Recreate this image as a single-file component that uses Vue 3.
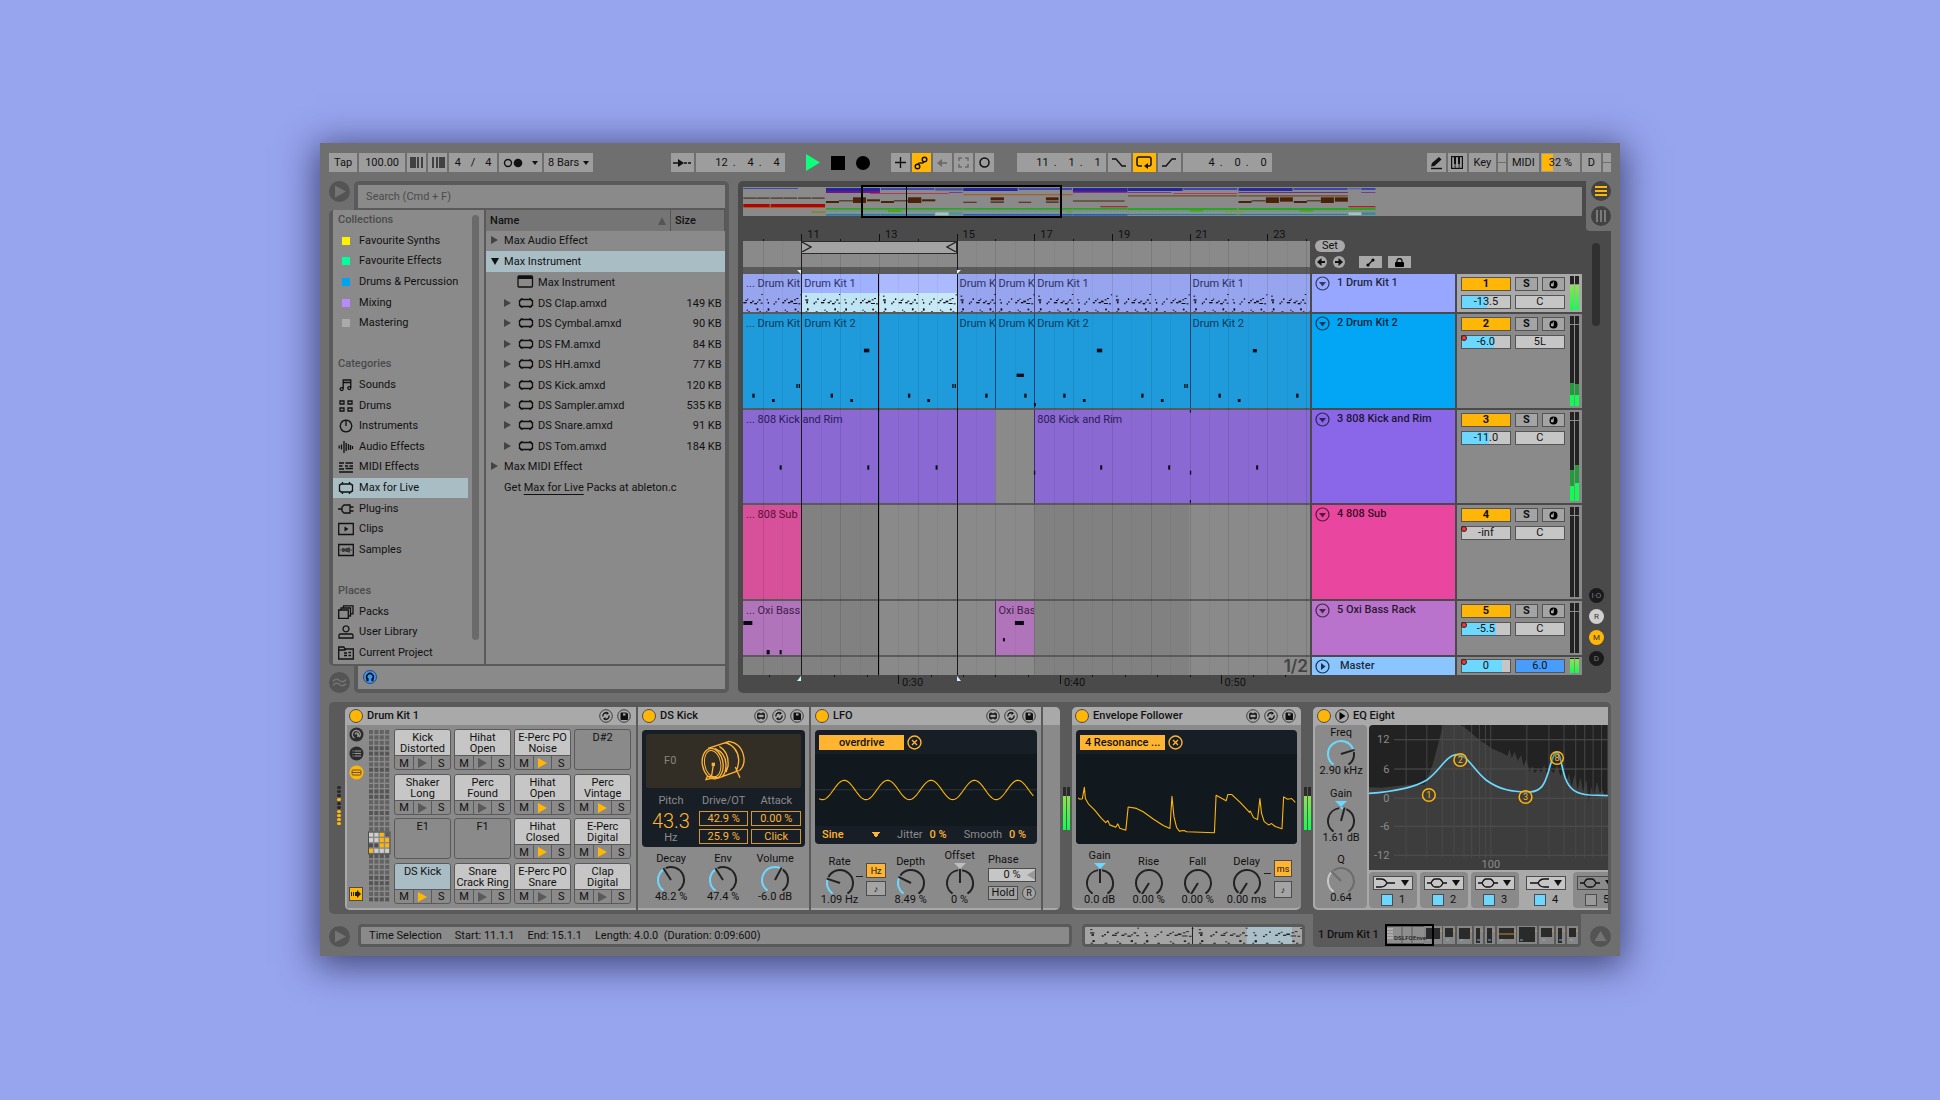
<script setup>
import { h } from 'vue'

/* ---------- small drawing helpers ---------- */
const polar = (a, r) => {
  const t = (a * Math.PI) / 180
  return [15 + r * Math.sin(t), 15 - r * Math.cos(t)].map(n => n.toFixed(2)).join(' ')
}
const arc = (a, b) => `M${polar(a, 13)}A13 13 0 ${b - a > 180 ? 1 : 0} 1 ${polar(b, 13)}`

const Knob = p => {
  const from = p.from ?? -145
  const parts = [
    h('path', { d: arc(Math.max(p.angle + 9, -145), 145), stroke: p.dim ? '#6c6c6c' : '#222' })
  ]
  if (p.from !== undefined) parts.push(h('path', { d: arc(-145, -8), stroke: '#222' }))
  if (p.angle - from > 4) parts.push(h('path', { d: arc(from, p.angle - 2), stroke: p.dim ? '#c8c8c8' : '#6cd8ff' }))
  parts.push(h('path', { d: `M15 15L${polar(p.angle, 14)}`, stroke: p.dim ? '#6c6c6c' : '#222' }))
  return h('svg', { class: 'knob', viewBox: '0 0 30 26', width: 30, height: 26, fill: 'none', 'stroke-width': 2, role: 'img' }, parts)
}
Knob.props = ['angle', 'from', 'dim']

const icons = {
  notes: 'M5.2 11V2h7.6v8M5.2 4.5h7.6M3.7 12.6a1.5 1.5 0 1 0 0-3 1.5 1.5 0 0 0 0 3M11.3 11.6a1.5 1.5 0 1 0 0-3 1.5 1.5 0 0 0 0 3',
  drums: 'M2 2h4v3H2zM10 2h4v3h-4zM2 9h4v3H2zM10 9h4v3h-4z',
  knob: 'M8 1.2a5.8 5.8 0 1 0 .01 0M8 1v6',
  audio: 'M1.2 5.5v3M3.5 4.5v5M6 1v12M8.2 3v8M10.5 4v6M12.5 5v5M14.5 6v3',
  midi: 'M1 3h5M7.5 3H15M1 6h3.5M7 6h3M11.5 6H15M1 9h5M7.5 8.5H15M1 12h14',
  max: 'M3 3h10q0 1 1.5 1v6q-1.500 0-1.500 1H3q0-1-1.500-1V4Q3 4 3 3zM4.500 1v2M11.500 1v2M4.500 11v2M11.500 11v2',
  plug: 'M0 7h4M6 3h6v8H6L4 9V5zM12 5h3.5M12 9h3.5',
  clip: 'M.7 1.5h14.6v11H.7z',
  sample: 'M.7 1.5h14.6v11H.7zM3 6.5v1M5 5v4M7 5.5v3M9 5v4M11 4.5v5M13 6.5v1',
  packs: 'M.7 5h9.6v8.3H.7zM3 5V3h9.5v8h-2M5.5 3V.8H15v8h-2.5',
  user: 'M8 .8a3 3 0 1 0 .01 0M1 13V10.5q0-1.5 1.5-1.5h11q1.5 0 1.5 1.5V13z',
  project: 'M.7 13V1h5l1.5 2h8.1v10zM.7 4h7M6 7h3M6 9.5h3M10.5 6.5h2.5M10.5 9.5h2.5'
}
const Icon = p =>
  h('svg', { viewBox: '0 0 16 14', width: 16, height: 14, fill: 'none', stroke: '#111', 'stroke-width': 1.3 }, [
    h('path', { d: icons[p.name] }),
    p.name === 'clip' ? h('path', { d: 'M6.5 4.5L10.5 7L6.5 9.5z', fill: '#111', stroke: 'none' }) : null
  ])
Icon.props = ['name']

const devIcons = {
  map: [h('path', { d: 'M3.8 5h6.400v4H3.800zM5 3.500V5M9 3.500V5M5 9v1.500M9 9v1.500', 'stroke-width': 1.3 })],
  swap: [h('path', { d: 'M4 7.5a3 3 0 0 1 4-3.5M10 6.5a3 3 0 0 1-4 3.5', 'stroke-width': 1.3 }), h('path', { d: 'M7.5 2.5l2.5 1.7-2.5 1.8zM6.5 8l-2.5 1.8 2.5 1.7z', fill: '#111', stroke: 'none' })],
  save: [h('path', { d: 'M4 4h5.5l1 1v5.5H4z', fill: '#111' }), h('path', { d: 'M6 4.500h2.500V6.500H6z', fill: '#aaa', stroke: 'none' })]
}
const DevIcon = p =>
  h('svg', { viewBox: '0 0 14 14', width: 14, height: 14, fill: 'none', stroke: '#111' }, [
    h('circle', { cx: 7, cy: 7, r: 6.3, stroke: '#3c3c3c' }),
    ...devIcons[p.name]
  ])
DevIcon.props = ['name']

/* ---------- browser ---------- */
const sidebar = [
  { head: 'Collections' },
  { label: 'Favourite Synths', color: '#fff200' },
  { label: 'Favourite Effects', color: '#00ff9c' },
  { label: 'Drums & Percussion', color: '#00a2f2' },
  { label: 'Mixing', color: '#b98aff' },
  { label: 'Mastering', color: '#aaaaaa' },
  {},
  { head: 'Categories' },
  { label: 'Sounds', icon: 'notes' },
  { label: 'Drums', icon: 'drums' },
  { label: 'Instruments', icon: 'knob' },
  { label: 'Audio Effects', icon: 'audio' },
  { label: 'MIDI Effects', icon: 'midi' },
  { label: 'Max for Live', icon: 'max', active: true },
  { label: 'Plug-ins', icon: 'plug' },
  { label: 'Clips', icon: 'clip' },
  { label: 'Samples', icon: 'sample' },
  {},
  { head: 'Places' },
  { label: 'Packs', icon: 'packs' },
  { label: 'User Library', icon: 'user' },
  { label: 'Current Project', icon: 'project' }
]
const files = [
  ['DS Clap.amxd', '149 KB'], ['DS Cymbal.amxd', '90 KB'], ['DS FM.amxd', '84 KB'], ['DS HH.amxd', '77 KB'],
  ['DS Kick.amxd', '120 KB'], ['DS Sampler.amxd', '535 KB'], ['DS Snare.amxd', '91 KB'], ['DS Tom.amxd', '184 KB']
]

/* ---------- arrangement ---------- */
const FIRST = 9.5
const SPAN = 14.6
const pct = bar => ((bar - FIRST) / SPAN) * 100 + '%'
const wpct = (a, b) => ((b - a) / SPAN) * 100 + '%'
const END = FIRST + SPAN
const bars = [11, 13, 15, 17, 19, 21, 23]
const barTicks = [10, 12, 14, 16, 18, 20, 22, 24]
const gridLines = Array.from({ length: 29 }, (_, i) => FIRST + 0.5 + i * 0.5).filter(b => b < END)
const seconds = [['0:30', 13.49], ['0:40', 17.66], ['0:50', 21.8]]
const secTicks = [10.18, 11.85, 12.68, 14.33, 15.16, 16.0, 16.83, 18.5, 19.33, 20.16, 21, 22.63, 23.46]

/* two bars of the drum pattern: x, y, width, height */
const beat = [
  [11, 76, 9, 4], [11, 65, 5, 3], [14, 82, 5, 6], [36, 86, 4, 5], [41, 82, 4, 4], [47, 73, 4, 5],
  [58, 84, 10, 4], [64, 78, 6, 3], [69, 74, 4, 3], [78, 84, 7, 4], [84, 80, 6, 3], [91, 87, 8, 4], [99, 83, 4, 3], [104, 76, 6, 4], [110, 86, 6, 3], [112, 60, 4, 3],
  [12, 112, 5, 3], [16, 103, 5, 6], [42, 112, 6, 3], [68, 107, 4, 3], [73, 112, 5, 3], [98, 103, 5, 6], [106, 112, 5, 3],
  [128, 76, 4, 3], [131, 84, 4, 5], [149, 88, 4, 4], [154, 82, 4, 4], [162, 73, 4, 4],
  [175, 84, 6, 4], [181, 78, 5, 4], [187, 74, 4, 3], [192, 84, 7, 4], [199, 80, 8, 5], [208, 87, 12, 3], [210, 76, 6, 3], [217, 72, 6, 3], [223, 88, 6, 3], [229, 61, 4, 3],
  [131, 103, 5, 7], [126, 112, 4, 3], [155, 112, 6, 3], [182, 107, 4, 3], [187, 112, 5, 3], [212, 104, 5, 5], [220, 112, 5, 3]
]
const beatNotes = []
for (let k = -1; k < 7; k++) for (const [x, y, w, hh] of beat) beatNotes.push([x + 215 + k * 233, y, w, hh])

const row = (xs, y, w, hh) => xs.map(x => [x, y, w, hh])
const tracks = [
  {
    n: 1, name: 'Drum Kit 1', h: 38, head: '#97a6ff', clip: '#97a4ee', ink: '#2b3164', vol: '-13.5', fill: 52, pan: 'C', lit: true,
    clips: [[9.5, 11, '... Drum Kit'], [11, 15, 'Drum Kit 1', true], [15, 16, 'Drum K'], [16, 17, 'Drum K'], [17, 21, 'Drum Kit 1'], [21, END, 'Drum Kit 1']],
    notes: beatNotes, meter: ['bright', 74, 74]
  },
  {
    n: 2, name: 'Drum Kit 2', h: 94, head: '#03a5f5', clip: '#1f9bdb', ink: '#08395a', vol: '-6.0', fill: 66, pan: '5L', dot: true,
    clips: [[9.5, 11, '... Drum Kit'], [11, 15, 'Drum Kit 2'], [15, 16, 'Drum K'], [16, 17, 'Drum K'], [17, 21, 'Drum Kit 2'], [21, END, 'Drum Kit 2']],
    notes: [...row([402, 1101], 104, 16, 11), [1569, 105, 12, 10], [860, 179, 22, 10], ...row([199, 206, 667, 674, 1363, 1370], 210, 4, 12),
      ...row([67, 302, 534, 766, 883, 1000, 1234, 1466, 1699], 239, 7, 12), ...row([126, 361, 592, 1059, 1293, 1524], 255, 8, 9), [912, 267, 6, 10]],
    meter: ['split', 26, 24]
  },
  {
    n: 3, name: '808 Kick and Rim', h: 93, head: '#8a66e8', clip: '#8a69d2', ink: '#2d1a58', vol: '-11.0', fill: 56, pan: 'C',
    clips: [[9.5, 16, '... 808 Kick and Rim'], [17, END, '808 Kick and Rim']],
    notes: [...row([149, 412, 617, 1111, 1315, 1579], 166, 6, 13), ...row([912, 1380], 182, 4, 12), [1380, 0, 3, 8], [1380, 270, 3, 9]],
    meter: ['split', 35, 40]
  },
  {
    n: 4, name: '808 Sub', h: 94, head: '#e9479f', clip: '#d6519a', ink: '#5a0d38', vol: '-inf', fill: 0, pan: 'C', dot: true,
    clips: [[9.5, 11, '... 808 Sub']], notes: [], meter: ['off']
  },
  {
    n: 5, name: 'Oxi Bass Rack', h: 54, head: '#b973cc', clip: '#b074ba', ink: '#42204a', vol: '-5.5', fill: 70, pan: 'C', dot: true,
    clips: [[9.5, 11, '... Oxi Bass'], [16, 17, 'Oxi Bas']],
    notes: [[40, 60, 27, 12], [110, 147, 9, 13], [149, 147, 6, 13], [855, 60, 27, 12], [819, 111, 6, 10]], meter: ['off']
  }
]

/* song overview blocks: x, y, width, height, colour */
const song = [
  [40, 174, 164, 3, '#4348a8'], [288, 174, 162, 9, '#2226a0'], [288, 183, 162, 6, '#761484'], [453, 174, 160, 6, '#3846b8'], [616, 174, 82, 4, '#4a58b4'], [616, 178, 82, 3, '#2a38a0'],
  [420, 189, 236, 3, '#b03a5a'], [657, 186, 41, 3, '#7a3a90'], [700, 174, 163, 9, '#2226a0'], [866, 174, 160, 6, '#3846b8'], [700, 192, 328, 4, '#a06038'],
  [1029, 174, 164, 9, '#2226a0'], [1029, 183, 164, 5, '#761484'], [1194, 174, 164, 9, '#2226a0'], [1360, 174, 162, 6, '#3846b8'], [1194, 186, 130, 3, '#7a3a90'], [1331, 189, 191, 3, '#b03a5a'], [1194, 195, 328, 5, '#7a5a38'],
  [1526, 174, 162, 9, '#2a2aa0'], [1691, 174, 162, 6, '#3846b8'], [1526, 186, 328, 3, '#6a3080'], [1526, 195, 328, 5, '#7a5a38'], [1856, 174, 36, 4, '#5a64b4'], [1894, 174, 43, 6, '#3846b8'], [1894, 186, 43, 3, '#7a3a90'],
  ...row([40, 80, 122, 162, 204, 245], 202, 39, 5).map(r => [...r, '#5e4a3c']),
  [40, 222, 79, 9, '#b00404'], [122, 222, 163, 9, '#b00404'], [40, 231, 245, 3, '#a06018'], [245, 244, 42, 5, '#8a8428'],
  [288, 213, 39, 6, '#4a2208'], [327, 211, 42, 3, '#4a2208'], [369, 202, 39, 17, '#4a2208'], [411, 208, 39, 6, '#4a2208'],
  [453, 213, 39, 6, '#4a2208'], [492, 211, 42, 3, '#4a2208'], [534, 202, 40, 17, '#4a2208'], [576, 208, 40, 6, '#4a2208'],
  [700, 215, 40, 4, '#5a3a28'], [782, 202, 40, 9, '#4a2208'], [782, 214, 40, 5, '#5a3a28'], [866, 215, 38, 4, '#5a3a28'], [948, 202, 38, 9, '#4a2208'], [948, 214, 38, 5, '#5a3a28'],
  [1029, 211, 155, 4, '#5e4028'], [1111, 228, 82, 4, '#a03030'],
  [1526, 213, 39, 6, '#4a2208'], [1565, 211, 42, 3, '#4a2208'], [1608, 202, 39, 17, '#4a2208'], [1650, 202, 39, 13, '#4a2208'],
  [1692, 213, 39, 6, '#4a2208'], [1731, 211, 42, 3, '#4a2208'], [1773, 202, 39, 17, '#4a2208'], [1815, 202, 39, 13, '#4a2208'], [1856, 228, 81, 4, '#b02020'],
  [288, 234, 410, 5, '#24a824'], [700, 234, 328, 5, '#24a824'], [1029, 234, 164, 5, '#24a824'], [1194, 234, 328, 6, '#24a824'], [1526, 234, 328, 6, '#24a824'], [1856, 234, 81, 6, '#24a824'],
  [474, 239, 40, 8, '#58a020'], [1010, 244, 18, 6, '#6a9028'], [1380, 240, 40, 5, '#58a020'], [1484, 244, 60, 6, '#909028'], [1710, 240, 40, 5, '#58a020'],
  [288, 252, 164, 5, '#3478a8'], [453, 252, 160, 5, '#3478a8'], [616, 247, 40, 9, '#98c8c4'], [657, 247, 40, 9, '#4898a0'], [700, 252, 328, 5, '#2c5eb0'], [1029, 252, 164, 5, '#2c5eb0'],
  [1194, 252, 328, 3, '#3478a8'], [1526, 252, 328, 3, '#3478a8'], [1856, 247, 38, 8, '#98c8c4'], [1896, 247, 41, 8, '#388ca0']
]

/* ---------- devices ---------- */
const pads = [
  ['Kick', 'Distorted', 0], ['Hihat', 'Open', 0], ['E-Perc PO', 'Noise', 1], ['D#2'],
  ['Shaker', 'Long', 0], ['Perc', 'Found', 0], ['Hihat', 'Open', 1], ['Perc', 'Vintage', 1],
  ['E1'], ['F1'], ['Hihat', 'Closed', 1], ['E-Perc', 'Digital', 1],
  ['DS Kick', '', 1, true], ['Snare', 'Crack Ring', 0], ['E-Perc PO', 'Snare', 0], ['Clap', 'Digital', 0]
]
const cells = []
const lit = ['ccya', 'ccyy', 'ddyy', 'yccc']
for (let r = 0; r < 32; r++)
  for (let c = 0; c < 4; c++) {
    const k = r - 19
    const map = { c: '#cfcfcf', y: '#ffb607', a: '#5a5a5a', d: '#4f4f4f' }
    cells.push({ x: 1 + c * 5.4, y: 1 + r * 5.4, f: k >= 0 && k < 4 ? map[lit[k][c]] : (r % 4 === 3 || r % 8 === 4 ? '#555' : '#626262') })
  }
const dots = [0, 0, 0, 1, 0, 0, 1, 1, 1, 1]

let sine = 'M568 325'
for (let x = 570; x <= 1206; x += 3) sine += `L${x} ${(297 - 29 * Math.cos(((x - 643) / 129.3) * 2 * Math.PI)).toFixed(1)}`

const bell = 'M0 7h4M16 7h4M4 7q2-4 4-4h4q2 0 4 4q-2 4-4 4H8q-2 0-4-4'
const bands = [
  ['1', 'M0 3h5q4 0 6 4q-2 4-6 4H0M11 7h8'],
  ['2', bell],
  ['3', bell],
  ['4', 'M20 3h-5q-4 0-6 4q2 4 6 4h5M9 7H1'],
  ['5', bell]
]
const freqLines = [321, 383, 429, 464, 494, 517, 540, 558, 574, 682, 748, 793, 828, 855, 880, 905]
const spectrum = (() => {
  let d = 'M210 292L250 293L300 287L350 283L376 284L400 225L432 105L484 105L512 125L540 150L580 177L610 190L624 198'
  const peaks = [[630, 178], [637, 205], [645, 185], [655, 212], [665, 195], [672, 228], [680, 208], [690, 245], [698, 228], [706, 250], [716, 235], [724, 248], [734, 225], [742, 252], [752, 238], [762, 250], [772, 225], [782, 258], [792, 240], [800, 275], [808, 250], [816, 290], [824, 255], [834, 300], [842, 262], [850, 305], [860, 268], [867, 335], [874, 290], [882, 318], [892, 275], [900, 310], [908, 300], [916, 322], [924, 305]]
  peaks.forEach(([x, y]) => (d += `L${x} ${y}`))
  return d + 'L924 540L210 540z'
})()
const nodes = [[389, 315, '1'], [483, 210, '2'], [678, 321, '3'], [772, 204, '8']]

const envelope = 'M115 318L120 322L128 321L134 286L137 320L146 336L165 355L185 380L198 393L204 387L210 400L228 407L234 397L240 410L258 416L265 346L290 350L310 360L340 382L370 402L390 411L396 313L402 375L410 408L418 419L432 417L440 421L523 424L528 310L558 327L563 308L575 308L600 332L628 362L630 358L640 378L652 384L659 320L664 365L672 390L685 400L694 396L705 405L725 412L730 315L742 322L754 320L765 332'

/* chain overview: x, width, kind */
const miniDevices = [
  [41, 18, 1], [60, 12, 0], [74, 15, 1], [91, 9, 2], [102, 10, 2], [114, 19, 1], [134, 20, 3], [156, 15, 0], [173, 9, 2], [184, 11, 0]
]
</script>

<template>
  <div class="stage">
    <main class="live">
      <!-- transport -->
      <header class="transport">
        <div class="grp">
          <button class="tb w28">Tap</button>
          <input class="tb w46" aria-label="Tempo" value="100.00" />
          <button class="tb w18" aria-label="Nudge down"><svg width="14" height="11" viewBox="0 0 14 11"><path d="M1 0v11M3 0v11M5 0v11M8 0v11M12 0v11" stroke="#111" stroke-width="1.3" /></svg></button>
          <button class="tb w18" aria-label="Nudge up"><svg width="14" height="11" viewBox="0 0 14 11"><path d="M2 0v11M6 0v11M9 0v11M11 0v11M13 0v11" stroke="#111" stroke-width="1.3" /></svg></button>
          <span class="tb w48 sig"><i>4</i><i>/</i><i>4</i></span>
          <button class="tb w43 spread" aria-label="Metronome"><svg width="20" height="10" viewBox="0 0 20 10"><circle cx="5" cy="5" r="3.5" fill="none" stroke="#111" stroke-width="1.4" /><circle cx="15" cy="5" r="4.3" fill="#111" /></svg><b class="tri"></b></button>
          <button class="tb w49 spread">8 Bars<b class="tri"></b></button>
        </div>
        <div class="sp1"></div>
        <div class="grp">
          <button class="tb w23" aria-label="Follow"><svg width="18" height="10" viewBox="0 0 18 10"><path d="M0 5h6M11 5h3M15 5h3" stroke="#111" stroke-width="1.3" /><path d="M5 1l6 4-6 4z" fill="#111" /></svg></button>
          <span class="tb w89 pos"><i>12</i><u>.</u><i>4</i><u>.</u><i>4</i></span>
        </div>
        <div class="grp play">
          <button aria-label="Play"><svg width="14" height="17" viewBox="0 0 14 17"><path d="M0 0l14 8.5L0 17z" fill="#0dff7c" /></svg></button>
          <button aria-label="Stop"><svg width="14" height="14"><rect width="14" height="14" fill="#000" /></svg></button>
          <button aria-label="Record"><svg width="14" height="14"><circle cx="7" cy="7" r="7" fill="#000" /></svg></button>
        </div>
        <div class="grp">
          <button class="tb w18" aria-label="Overdub"><svg width="11" height="11"><path d="M5.5 0v11M0 5.5h11" stroke="#111" stroke-width="1.4" /></svg></button>
          <button class="tb w18 on" aria-label="Automation arm"><svg width="14" height="14" viewBox="0 0 14 14" fill="none" stroke="#111" stroke-width="1.4"><circle cx="3.5" cy="10.5" r="2.3" /><circle cx="10.5" cy="3.5" r="2.3" /><path d="M4 8.3Q4.5 6.5 7 7T9.8 5.6" /></svg></button>
          <button class="tb w18" aria-label="Re-enable"><svg width="10" height="10"><path d="M3 5h7" stroke="#6a6a6a" stroke-width="1.6" /><path d="M0 5l5-4v8z" fill="#6a6a6a" /></svg></button>
          <button class="tb w18" aria-label="Capture"><svg width="11" height="11" fill="none" stroke="#6a6a6a" stroke-width="1.5"><path d="M1 4V1h3M7 1h3v3M10 7v3H7M4 10H1V7" /></svg></button>
          <button class="tb w18" aria-label="Session record"><svg width="11" height="11"><circle cx="5.5" cy="5.5" r="4.5" fill="none" stroke="#111" stroke-width="1.5" /></svg></button>
        </div>
        <div class="grp loop">
          <span class="tb w89 pos"><i>11</i><u>.</u><i>1</i><u>.</u><i>1</i></span>
          <button class="tb w23" aria-label="Punch in"><svg width="14" height="9" fill="none" stroke="#111" stroke-width="1.3"><path d="M0 1h4l6 7h4" /></svg></button>
          <button class="tb w23 on" aria-label="Loop"><svg width="16" height="13" fill="none" stroke="#111" stroke-width="1.5"><path d="M6 10H3q-2 0-2-2V3q0-2 2-2h10q2 0 2 2v5q0 2-2 2h-2" /><path d="M12 7v6l-4-3z" fill="#111" stroke="none" /></svg></button>
          <button class="tb w23" aria-label="Punch out"><svg width="14" height="9" fill="none" stroke="#111" stroke-width="1.3"><path d="M0 8h4l6-7h4" /></svg></button>
          <span class="tb w89 pos"><i>4</i><u>.</u><i>0</i><u>.</u><i>0</i></span>
        </div>
        <div class="sp2"></div>
        <div class="grp">
          <button class="tb w18" aria-label="Draw"><svg width="13" height="14"><path d="M1 12.5h11" stroke="#111" stroke-width="1.4" /><path d="M1 10.5l1-3.5L9 1l2.5 2.5L4.5 10z" fill="#111" /></svg></button>
          <button class="tb w18" aria-label="Computer keyboard"><svg width="12" height="13"><rect x=".6" y=".6" width="10.8" height="11.8" fill="none" stroke="#111" stroke-width="1.2" /><path d="M3 1h2v7H3zM7 1h2v7H7zM3.7 8h.8v4h-.8zM7.7 8h.8v4h-.8z" fill="#111" /></svg></button>
          <button class="tb w27">Key</button>
          <span class="duo"></span>
          <button class="tb w31">MIDI</button>
          <span class="tb w39 cpu">32 %</span>
          <button class="tb w18">D</button>
          <span class="duo"></span>
        </div>
      </header>

      <!-- browser and arrangement -->
      <section class="middle">
        <section class="browser">
          <div class="b-top">
            <div class="corner"><button class="disc" aria-label="Preview"><svg width="21" height="21"><path d="M6 4.5l11 6-11 6z" fill="#747474" /></svg></button></div>
            <div class="tabbed tt"><input class="search" aria-label="Search" placeholder="Search (Cmd + F)" /></div>
          </div>
          <div class="b-mid">
            <nav class="side">
              <div class="side-list">
                <template v-for="(s, i) in sidebar" :key="i">
                  <h3 v-if="s.head" class="s-head">{{ s.head }}</h3>
                  <button v-else-if="s.label" class="s-item" :class="{ active: s.active }">
                    <span v-if="s.color" class="sw"><em :style="{ background: s.color }"></em></span>
                    <Icon v-else :name="s.icon" />{{ s.label }}
                  </button>
                  <div v-else class="s-gap"></div>
                </template>
              </div>
              <div class="s-scroll"></div>
            </nav>
            <div class="files">
              <table>
                <thead><tr><th>Name<svg width="8" height="8"><path d="M4 0l4 8H0z" fill="#555" /></svg></th><th class="sz">Size</th></tr></thead>
                <tbody>
                  <tr><td><span class="ar"></span>Max Audio Effect</td><td></td></tr>
                  <tr class="sel"><td><span class="ar down"></span>Max Instrument</td><td></td></tr>
                  <tr><td class="l2"><svg width="17" height="13" class="fi"><rect x="1" y="1" width="14.5" height="11" rx="1" fill="none" stroke="#111" stroke-width="1.3" /><path d="M1 1h14.5v3H1z" fill="#111" /></svg>Max Instrument</td><td></td></tr>
                  <tr v-for="f in files" :key="f[0]">
                    <td class="l1"><span class="ar"></span><svg width="16" height="12" viewBox="0 0 16 12" class="fi2" fill="none" stroke="#111" stroke-width="1.3"><path d="M2.500 2.500h11v1.200h1v4.600h-1v1.200h-11V8.300h-1V3.700h1zM4 1v1.500M12 1v1.500M4 9.500V11M12 9.500V11" /></svg>{{ f[0] }}</td>
                    <td class="num">{{ f[1] }}</td>
                  </tr>
                  <tr><td><span class="ar"></span>Max MIDI Effect</td><td></td></tr>
                  <tr><td class="get" colspan="2">Get <a href="#">Max for Live</a> Packs at ableton.c</td></tr>
                </tbody>
              </table>
            </div>
          </div>
          <div class="b-top">
            <div class="corner c-bl"><button class="disc" aria-label="Groove pool"><svg width="21" height="21" fill="none" stroke="#747474" stroke-width="1.5"><path d="M4 9.5q3-4 6.5-1t6.5-1M4 13.5q3-4 6.5-1t6.5-1" /></svg></button></div>
            <div class="tabbed bt"><div class="preview"><svg width="14" height="14"><circle cx="7" cy="7" r="6.5" fill="#3f95f5" stroke="#2a4a70" /><path d="M4.5 10.5V9A3.3 3.3 0 1 1 9.5 9v1.5" fill="none" stroke="#111" stroke-width="1.5" /><path d="M3.5 8.2h2v3h-2zM8.5 8.2h2v3h-2z" fill="#111" /></svg></div></div>
          </div>
        </section>

        <section class="arr">
          <div class="arr-main">
            <div class="overview">
              <svg viewBox="39 171 2517 87" preserveAspectRatio="none">
                <rect v-for="(s, i) in song" :key="i" :x="s[0]" :y="s[1]" :width="s[2]" :height="s[3]" :fill="s[4]" />
                <path d="M288 248H612M700 248H1028M1029 248H1193M1200 248H1522M1526 248H1854" stroke="#50b4b0" stroke-width="4" stroke-dasharray="6 3" />
              </svg>
              <div class="viewport"><i></i></div>
            </div>
            <div class="area">
              <div class="timeline">
                <div class="ruler">
                  <span v-for="b in bars" :key="b" class="rl" :style="{ left: pct(b) }">{{ b }}</span>
                  <span v-for="b in barTicks" :key="b" class="rt" :style="{ left: pct(b) }"></span>
                </div>
                <div class="lanes">
                  <div class="lane scrub"></div>
                  <div class="strip"></div>
                  <div v-for="t in tracks" :key="t.n" class="lane" :style="{ height: t.h + 'px' }">
                    <div v-for="(c, i) in t.clips" :key="i" class="clip" :class="{ picked: c[3] }" :style="{ left: pct(c[0]), width: wpct(c[0], c[1]), backgroundColor: t.clip, color: t.ink }">{{ c[2] }}</div>
                    <svg class="notes" :viewBox="`39 0 1701 ${t.h * 3}`" preserveAspectRatio="none">
                      <rect v-for="(n, i) in t.notes" :key="i" :x="n[0]" :y="n[1]" :width="n[2]" :height="n[3]" fill="#0a0a14" />
                    </svg>
                  </div>
                  <div class="lane master"><span class="zoomlv">1/2</span></div>
                  <i v-for="g in gridLines" :key="g" class="gl" :class="{ half: g % 1 }" :style="{ left: pct(g) }"></i>
                  <i class="edge" :style="{ left: pct(11) }"></i>
                  <i class="edge" :style="{ left: pct(15) }"></i>
                  <i class="head" :style="{ left: pct(12.98) }"></i>
                  <div class="brace" :style="{ left: pct(11), width: wpct(11, 15) }">
                    <svg width="10" height="10" fill="none" stroke="#222" stroke-width="1.2"><path d="M0 0l9 5-9 5" /></svg>
                    <svg width="10" height="10" fill="none" stroke="#222" stroke-width="1.2"><path d="M10 0L1 5l9 5" /></svg>
                  </div>
                  <span class="mk top l" :style="{ left: pct(11) }"></span>
                  <span class="mk top r" :style="{ left: pct(15) }"></span>
                </div>
                <div class="ruler time">
                  <span v-for="s in seconds" :key="s[0]" class="rl" :style="{ left: pct(s[1]) }">{{ s[0] }}</span>
                  <span v-for="s in secTicks" :key="s" class="rt" :style="{ left: pct(s) }"></span>
                  <span class="mk l" :style="{ left: pct(11) }"></span>
                  <span class="mk r" :style="{ left: pct(15) }"></span>
                </div>
              </div>
              <div class="heads">
                <div class="setrow">
                  <button class="set">Set</button>
                  <div class="setbtns">
                    <button class="rd" aria-label="Previous locator"><svg width="8" height="8"><path d="M4 4h4" stroke="#111" stroke-width="2" /><path d="M0 4l4.5-4v8z" fill="#111" /></svg></button>
                    <button class="rd" aria-label="Next locator"><svg width="8" height="8"><path d="M0 4h4" stroke="#111" stroke-width="2" /><path d="M8 4L3.5 0v8z" fill="#111" /></svg></button>
                    <button class="sq first" aria-label="Automation mode"><svg width="9" height="9"><path d="M2 7l5-5" stroke="#111" stroke-width="1.3" /><circle cx="2" cy="7" r="1.6" /><circle cx="7" cy="2" r="1.6" /></svg></button>
                    <button class="sq" aria-label="Lock envelopes"><svg width="9" height="9"><rect x="0" y="4" width="9" height="5" rx="1" /><path d="M2 4V3a2.5 2.5 0 0 1 5 0v1" fill="none" stroke="#111" stroke-width="1.3" /></svg></button>
                  </div>
                </div>
                <div v-for="t in tracks" :key="t.n" class="hrow" :style="{ height: t.h + 'px' }">
                  <div class="tname" :style="{ background: t.head }">
                    <svg width="15" height="15"><circle cx="7.5" cy="7.5" r="6.5" fill="none" stroke="#000" stroke-opacity=".65" stroke-width="1.2" /><path d="M4 6h7l-3.5 4.5z" fill="#000" fill-opacity=".65" /></svg>
                    {{ t.n }} {{ t.name }}
                  </div>
                  <div class="mix" :class="{ litrow: t.lit }">
                    <div class="ctl">
                      <button class="mb act">{{ t.n }}</button><button class="mb s">S</button>
                      <button class="mb s" aria-label="Arm"><svg width="9" height="9"><circle cx="4.5" cy="4.5" r="4" fill="#000" /><path d="M4.800 1.500v3.200a1.500 1.500 0 1 1-1-1.200V2z" fill="#aaa" /></svg></button>
                      <span class="vol"><em :style="{ width: t.fill + '%' }"></em><b v-if="t.dot"></b><span>{{ t.vol }}</span></span>
                      <span class="vol pan"><span>{{ t.pan }}</span></span>
                    </div>
                    <div class="meter" :class="t.meter[0]">
                      <i><s :style="{ height: (t.meter[1] || 0) + '%' }"></s></i>
                      <i><s :style="{ height: (t.meter[2] || 0) + '%' }"></s></i>
                    </div>
                  </div>
                </div>
                <div class="hrow mrow">
                  <div class="tname mname">
                    <svg width="15" height="15"><circle cx="7.5" cy="7.5" r="6.5" fill="none" stroke="#16324e" stroke-width="1.2" /><path d="M6 4v7l4.5-3.5z" fill="#16324e" /></svg>
                    Master
                  </div>
                  <div class="mix">
                    <div class="ctl"><span class="vol"><em class="mfill"></em><b></b><span>0</span></span><span class="vol pan cue"><span>6.0</span></span></div>
                    <div class="meter bright"><i><s class="full"></s></i><i><s class="full"></s></i></div>
                  </div>
                </div>
              </div>
            </div>
          </div>
          <div class="arr-side">
            <div class="views">
              <button class="disc dk" aria-label="Arrangement view"><svg width="20" height="20"><path d="M4 6h12M4 10h12M4 14h12" stroke="#ffb607" stroke-width="2" /></svg></button>
              <button class="disc dk" aria-label="Session view"><svg width="20" height="20"><path d="M6 4v12M10 4v12M14 4v12" stroke="#7a7a7a" stroke-width="2" /></svg></button>
            </div>
            <div class="vside">
              <div class="vscroll"></div>
              <div class="vbtns">
                <button>I·O</button><button class="lt">R</button><button class="yl">M</button><button>D</button>
              </div>
            </div>
          </div>
        </section>
      </section>

      <!-- device chain -->
      <section class="chain">
        <div class="chaindots"><i v-for="(d, i) in dots" :key="i" :class="{ y: d }"></i></div>
        <div class="rack">
          <article class="dev d-rack">
            <h2><b class="pw"></b>Drum Kit 1<span class="dic"><DevIcon name="swap" /><DevIcon name="save" /></span></h2>
            <div class="rackbody">
              <div class="rackbtns">
                <svg width="15" height="15"><circle cx="7.5" cy="7.5" r="7" fill="#2c2c2c" /><path d="M5.5 11a4 4 0 1 1 5.5-2M8 7l3 3M6 7.5a1.8 1.8 0 1 1 2 2" fill="none" stroke="#999" stroke-width="1.3" /></svg>
                <svg width="15" height="15"><circle cx="7.5" cy="7.5" r="7" fill="#2c2c2c" /><path d="M3.5 5h1M3.5 7.5h1M3.5 10h1M5.5 5H12M5.5 7.5H12M5.5 10H12" stroke="#999" stroke-width="1.2" /></svg>
                <svg width="15" height="15"><circle cx="7.5" cy="7.5" r="7" fill="#ffb607" /><rect x="3" y="5" width="9" height="5" rx="1" fill="none" stroke="#6a5216" /><path d="M3 7.5h9" stroke="#6a5216" /></svg>
                <svg class="last" width="14" height="14"><rect x=".5" y=".5" width="13" height="13" fill="#ffb607" stroke="#4c4c4c" /><path d="M2.5 5v4M4.5 5v4" stroke="#222" /><path d="M6 5h2V3l4 4-4 4V9H6z" fill="#222" /></svg>
              </div>
              <svg class="mini" width="23" height="175">
                <rect v-for="(c, i) in cells" :key="i" :x="c.x" :y="c.y" width="4" height="4" :fill="c.f" />
                <rect x=".5" y="103" width="21.5" height="22" fill="none" stroke="#4c4c4c" />
              </svg>
              <div class="pads">
                <div v-for="(p, i) in pads" :key="i" class="pad" :class="{ empty: p.length === 1, pick: p[3] }">
                  <div class="pn">{{ p[0] }}<br v-if="p[1]" />{{ p[1] }}</div>
                  <div v-if="p.length > 1" class="pb">
                    <button>M</button><button :class="{ hot: p[2] }" aria-label="Play pad"><svg width="9" height="10"><path d="M0 0l9 5-9 5z" /></svg></button><button>S</button>
                  </div>
                </div>
              </div>
            </div>
          </article>

          <article class="dev d-kick">
            <h2><b class="pw"></b>DS Kick<span class="dic"><DevIcon name="map" /><DevIcon name="swap" /><DevIcon name="save" /></span></h2>
            <div class="lcd kick">
              <div class="kpic"><span>F0</span>
                <svg width="46" height="44" viewBox="212 148 138 132" fill="none" stroke="#ffb532" stroke-width="4">
                  <ellipse cx="250" cy="222" rx="31" ry="46" transform="rotate(-10 250 222)" /><ellipse cx="250" cy="222" rx="24" ry="40" transform="rotate(-10 250 222)" stroke-width="3" />
                  <path d="M256 176q34 14 34 50 0 24-12 36M236 176L300 155M264 266L328 243M270 170q30 18 26 60l-6 18M298 155q40 6 46 50 2 24-14 38M288 158q38 14 40 52 0 20-8 36M252 226l-6 38M230 270l34-8-30-2zM318 232l14 32" />
                  <rect x="247" y="219" width="10" height="10" fill="#ffb532" stroke="none" />
                </svg>
              </div>
              <div class="kvals">
                <div class="kc"><label>Pitch</label><strong>43.3</strong><label>Hz</label></div>
                <div class="kc"><label>Drive/OT</label><button>42.9 %</button><button>25.9 %</button></div>
                <div class="kc"><label>Attack</label><button>0.00 %</button><button>Click</button></div>
              </div>
            </div>
            <div class="knobs k3">
              <div class="kn">Decay<Knob :angle="-33" />48.2 %</div>
              <div class="kn">Env<Knob :angle="-33" />47.4 %</div>
              <div class="kn">Volume<Knob :angle="28" />-6.0 dB</div>
            </div>
          </article>

          <article class="dev d-lfo">
            <h2><b class="pw"></b>LFO<span class="dic"><DevIcon name="map" /><DevIcon name="swap" /><DevIcon name="save" /></span></h2>
            <div class="lcd lfo">
              <div class="maprow"><button class="target">overdrive</button><button class="clr" aria-label="Clear mapping"><svg width="15" height="15" fill="none" stroke="#ffb532" stroke-width="1.4"><circle cx="7.5" cy="7.5" r="6.5" /><path d="M5 5l5 5M10 5l-5 5" /></svg></button></div>
              <svg class="scope" viewBox="556 189 661 216" preserveAspectRatio="none"><path d="M556 296H1217" stroke="#2c343b" stroke-width="3" /><path :d="sine" fill="none" stroke="#ffb607" stroke-width="3.3" /></svg>
              <div class="lrow">
                <select aria-label="Waveform"><option>Sine</option></select>
                <label>Jitter</label><span>0 %</span><label>Smooth</label><span>0 %</span>
              </div>
            </div>
            <div class="knobs lk">
              <div class="kn">Rate<Knob :angle="-72" />1.09 Hz</div>
              <div class="units"><button class="y">Hz</button><button>♪</button></div>
              <div class="kn">Depth<Knob :angle="-64" />8.49 %</div>
              <div class="kn">Offset<i class="arrowdn gray"></i><Knob :angle="0" :from="0" />0 %</div>
              <div class="phase"><label>Phase</label><span class="pv">0 %<i></i></span><div><button>Hold</button><button class="rr">R</button></div></div>
            </div>
          </article>
          <div class="dev d-end"><h2></h2></div>
        </div>

        <div class="cmeter"><i></i><i></i></div>

        <article class="dev solo d-env">
          <h2><b class="pw"></b>Envelope Follower<span class="dic"><DevIcon name="map" /><DevIcon name="swap" /><DevIcon name="save" /></span></h2>
          <div class="lcd lfo">
            <div class="maprow"><button class="target">4 Resonance ...</button><button class="clr" aria-label="Clear mapping"><svg width="15" height="15" fill="none" stroke="#ffb532" stroke-width="1.4"><circle cx="7.5" cy="7.5" r="6.5" /><path d="M5 5l5 5M10 5l-5 5" /></svg></button></div>
            <svg class="scope tallscope" viewBox="109 185 661 273" preserveAspectRatio="none"><path :d="envelope" fill="none" stroke="#ffb607" stroke-width="3.3" stroke-linejoin="round" /></svg>
          </div>
          <div class="knobs ek">
            <div class="kn">Gain<i class="arrowdn"></i><Knob :angle="0" :from="0" />0.0 dB</div>
            <div class="kn">Rise<Knob :angle="-148" />0.00 %</div>
            <div class="kn">Fall<Knob :angle="-148" />0.00 %</div>
            <div class="kn">Delay<Knob :angle="-148" />0.00 ms</div>
            <div class="units sqr"><button class="y">ms</button><button>♪</button></div>
          </div>
        </article>

        <div class="cmeter"><i></i><i></i></div>

        <article class="dev solo d-eq">
          <h2><b class="pw"></b><svg width="14" height="14"><circle cx="7" cy="7" r="6.3" fill="none" stroke="#222" /><path d="M4.5 3l6 4-6 4z" /></svg>EQ Eight</h2>
          <div class="eqbody">
            <div class="eqk">
              <div class="kn">Freq<Knob :angle="73" />2.90 kHz</div>
              <div class="kn">Gain<i class="arrowdn"></i><Knob :angle="15" :from="0" />1.61 dB</div>
              <div class="kn">Q<Knob :angle="-45" dim="1" />0.64</div>
            </div>
            <div class="eqr">
              <svg class="eqg" viewBox="210 105 714 435" preserveAspectRatio="none">
                <rect x="210" y="105" width="714" height="435" fill="#222" />
                <path :d="spectrum" fill="#3d3d3d" />
                <path d="M285 149H924M285 237H924M285 325H924M285 409H924M285 496H924" stroke="#505050" stroke-width="3" />
                <path v-for="f in freqLines" :key="f" :d="`M${f} 105V505`" stroke="#4c4c4c" stroke-width="2.5" />
                <g fill="#8c8c8c" font-size="33" text-anchor="end"><text x="271" y="160">12</text><text x="271" y="248">6</text><text x="271" y="336">0</text><text x="271" y="420">-6</text><text x="271" y="507">-12</text><text x="602" y="535">100</text></g>
                <path d="M210 310C300 304 350 290 383 270C420 245 440 196 470 194C505 192 515 232 560 270C600 300 640 306 690 306C725 304 735 285 748 240C760 196 765 188 772 188C782 188 785 230 797 265C810 300 830 312 870 315L924 317" fill="none" stroke="#6cd8ff" stroke-width="5" />
                <g v-for="n in nodes" :key="n[2]"><circle :cx="n[0]" :cy="n[1]" r="19" fill="#3d3d3d" fill-opacity=".4" stroke="#ffb607" stroke-width="4.5" /><text :x="n[0]" :y="n[1] + 9" font-size="27" fill="#ffb607" text-anchor="middle">{{ n[2] }}</text></g>
              </svg>
              <div class="bands">
                <div v-for="(b, i) in bands" :key="i" class="band" :class="{ cur: i === 3, off: i === 4 }">
                  <button :aria-label="'Filter type ' + b[0]"><svg width="20" height="14" fill="none" stroke="#111" stroke-width="1.3"><path :d="b[1]" /></svg><b class="tri big"></b></button>
                  <label><input type="checkbox" :checked="i < 4" />{{ b[0] }}</label>
                </div>
              </div>
            </div>
          </div>
        </article>
      </section>

      <!-- status -->
      <footer class="status">
        <button class="disc" aria-label="Info view"><svg width="21" height="21"><path d="M6 4.5l11 6-11 6z" fill="#747474" /></svg></button>
        <div class="info"><span>Time Selection</span><span>Start: 11.1.1</span><span>End: 15.1.1</span><span>Length: 4.0.0&nbsp; (Duration: 0:09:600)</span></div>
        <div class="clipview">
          <svg viewBox="0 0 652 54" preserveAspectRatio="none">
            <rect x="486" width="136" height="54" fill="#a9c0c8" />
            <g v-for="k in 3" :key="k"><rect v-for="(n, i) in beat" :key="i" :x="(n[0] + (k - 1) * 233) * 1.4" :y="n[1] * .92 - 53" :width="n[2] * 1.4" :height="n[3]" fill="#222" /></g>
            <path d="M323 0V54" stroke="#222" stroke-width="3" />
          </svg>
        </div>
        <div class="devview">
          <span>1 Drum Kit 1</span>
          <svg width="196" height="22">
            <rect x="3" y="3" width="38" height="16" fill="#8e8e8e" />
            <path d="M4 5h6M4 8h6M4 11h6M4 14h6" stroke="#b8b8b8" stroke-width="1.5" />
            <path d="M19 3v16M29 3v16" stroke="#5a5a5a" />
            <g v-for="(m, i) in miniDevices" :key="i">
              <rect :x="m[0]" y="2" :width="m[1]" height="18" fill="#858585" />
              <rect :x="m[0] + 2" :y="m[2] === 3 ? 3 : 4" :width="m[1] - (m[2] === 2 ? 5 : 4)" :height="m[2] === 1 ? 11 : m[2] === 0 ? 9 : 15" fill="#2a2a2a" />
              <path :d="`M${m[0] + m[1] - 2} 7h2`" stroke="#d89a2a" /><path :d="`M${m[0] + 3} 16h3`" stroke="#7ab4c8" />
            </g>
            <path d="M116 10h16" stroke="#c08a2a" />
            <g fill="#1a1a1a" font-size="6"><text x="11" y="16">DS</text><text x="19" y="16">LFO</text><text x="30" y="16">Enve</text></g>
            <rect x="3" y="1" width="47" height="20" fill="none" stroke="#000" stroke-width="2" />
          </svg>
        </div>
        <button class="disc end" aria-label="Show detail"><svg width="21" height="21"><path d="M10.5 5l6 10h-12z" fill="#747474" /></svg></button>
      </footer>
    </main>
  </div>
</template>

<style>
html, body { margin: 0; background: #97a4ee; }
</style>

<style scoped>
* { box-sizing: border-box; }
button, input, select { font: inherit; color: inherit; border: 0; padding: 0; margin: 0; background: none; border-radius: 0; outline: none; }
h2, h3 { margin: 0; font: inherit; }
i, em, u, s { font-style: normal; text-decoration: none; }
svg { display: block; flex: none; }
.stage { min-height: 100vh; padding: 143px 16.5%; background: #97a4ee; font: 11px/14px Roboto, "Liberation Sans", sans-serif; color: #111; }
.live { background: #6f6f6f; padding: 10px 9px 9px; box-shadow: 0 6px 34px 4px rgba(38, 42, 84, .75); }

/* transport */
.transport { display: flex; align-items: center; height: 19px; }
.grp { display: flex; align-items: center; gap: 2px; }
.sp1 { flex: 1; } .sp2 { flex: 2; }
.tb { height: 19px; background: #9d9d9d; display: flex; align-items: center; justify-content: center; text-align: center; }
.w18 { width: 19px; } .w23 { width: 23px; } .w27 { width: 27px; } .w28 { width: 28px; } .w31 { width: 31px; } .w39 { width: 39px; } .w43 { width: 43px; } .w46 { width: 46px; } .w48 { width: 48px; } .w49 { width: 49px; } .w89 { width: 89px; }
.on { background: #ffb607; }
.sig { gap: 10px; }
.spread { justify-content: space-between; padding: 0 4px; }
.tri { width: 0; border: 3px solid transparent; border-top: 4px solid #111; border-bottom: 0; }
.tri.big { border-width: 4px; border-top-width: 6px; border-bottom: 0; }
.pos { justify-content: flex-end; padding-right: 5px; }
.pos i { width: 18px; text-align: right; }
.pos u { width: 8px; text-align: right; }
.play { gap: 11px; margin: 0 21px; }
.loop { margin-left: 23px; }
.duo { width: 8px; height: 19px; background: linear-gradient(#9d9d9d 9px, #6f6f6f 9px, #6f6f6f 10px, #9d9d9d 10px); }
.cpu { background: linear-gradient(90deg, #ffb607 11px, #9d9d9d 11px); border: 1px solid #9d9d9d; }

/* browser */
.middle { display: flex; gap: 9px; margin-top: 9px; }
.browser { flex: 0 0 400px; display: flex; flex-direction: column; }
.b-top { display: flex; }
.corner { width: 25px; }
.c-bl { padding-top: 6px; }
.disc { display: block; width: 21px; height: 21px; border-radius: 50%; background: #545454; flex: none; }
.tabbed { flex: 1; background: #5a5a5a; padding: 4px; }
.tt { border-radius: 5px 5px 0 0; padding-bottom: 2px; }
.bt { border-radius: 0 0 5px 5px; padding-top: 0; }
.search { width: 100%; height: 23px; display: block; background: #8a8a8a; padding: 0 8px; }
.search::placeholder { color: #4a4a4a; opacity: 1; }
.preview { height: 23px; background: #8a8a8a; padding: 4px 5px; }
.b-mid { display: flex; gap: 2px; background: #5a5a5a; padding: 0 4px 2px; border-radius: 5px 0 0 5px; }
.side { flex: 0 0 151px; height: 454px; background: #8a8a8a; display: flex; }
.side-list { width: 135px; display: flex; flex-direction: column; padding-bottom: 1px; }
.side-list > * { flex: 1 1 0; min-height: 0; }
.s-head { padding-left: 5px; color: #4b4b4b; font-weight: 500; display: flex; align-items: center; }
.s-item { display: flex; align-items: center; gap: 5px; padding-left: 5px; text-align: left; white-space: nowrap; }
.s-item.active { background: #a9bdc5; }
.sw { width: 16px; padding-left: 4px; }
.sw em { display: block; width: 8px; height: 8px; }
.s-scroll { width: 7px; height: 425px; border-radius: 4px; background: #6a6a6a; margin: 5px 0 0 4px; }
.files { flex: 1; background: #8a8a8a; }
table { width: 100%; height: 288px; border-collapse: collapse; table-layout: fixed; }
th { height: 21px; padding: 0 4px; text-align: left; font-weight: 500; background: #757575; border-right: 1px solid #555; }
th svg { float: right; margin-top: 3px; }
.sz { width: 54px; }
td { padding: 0; white-space: nowrap; }
td:first-child { padding-left: 5px; }
td:first-child.l1 { padding-left: 18px; }
td:first-child.l2 { padding-left: 31px; }
td:first-child.get { padding-left: 18px; }
.get a { color: inherit; text-underline-offset: 3px; }
.sel { background: #a9bdc5; }
.ar { display: inline-block; border: 4px solid transparent; border-left: 7px solid #444; border-right: 0; margin-right: 6px; }
.ar.down { border: 4px solid transparent; border-top: 7px solid #111; border-bottom: 0; margin-right: 5px; }
.fi, .fi2 { display: inline-block; vertical-align: -2px; margin-right: 4px; }
.fi2 { margin: 0 4px 0 1px; }
.num { text-align: right; padding-right: 3px; }

/* arrangement */
.arr { flex: 1; min-width: 0; display: flex; background: #4a4a4a; border-radius: 5px; }
.arr-main { flex: 1; min-width: 0; padding: 6px 4px 0 5px; }
.overview { position: relative; height: 29px; background: #8a8a8a; }
.overview svg { width: 100%; height: 100%; }
.viewport { position: absolute; left: 14%; width: 24%; top: -2px; bottom: -2px; border: 2px solid #000; }
.viewport i { position: absolute; left: 22%; top: 0; bottom: 0; width: 1px; background: #000; }
.area { display: flex; gap: 2px; }
.timeline { flex: 1; min-width: 0; }
.ruler { position: relative; height: 25px; }
.rl { position: absolute; bottom: 0; padding-left: 5px; border-left: 1px solid #111; height: 7px; line-height: 7px; }
.rt { position: absolute; bottom: 0; width: 1px; height: 2px; background: #111; }
.ruler:not(.time) .rl { line-height: 1px; }
.time { height: 18px; }
.time .rl { top: 0; bottom: auto; height: 9px; padding-left: 3px; line-height: 16px; }
.time .rt { top: 0; bottom: auto; }
.mk { position: absolute; top: 1px; border-bottom: 5px solid #d8f4fa; }
.mk.l { border-left: 4px solid transparent; margin-left: -4px; }
.mk.r { border-right: 4px solid transparent; }
.mk.top { top: 29px; border-bottom: 0; border-top: 4px solid #d8f4fa; }
.lanes { position: relative; display: flex; flex-direction: column; gap: 2px; background: #5a5a5a; }
.lane { position: relative; overflow: hidden; background: linear-gradient(90deg, #818181 24%, #8a8a8a 24%, #8a8a8a 51.3%, #818181 51.3%, #818181 78.7%, #8a8a8a 78.7%); }
.scrub { height: 26px; background: #8a8a8a; }
.strip { height: 3px; }
.master { height: 18px; }
.zoomlv { position: absolute; right: 2px; top: 0; font: 600 17px/18px Inter, sans-serif; color: #444; }
.clip { position: absolute; top: 0; bottom: 0; overflow: hidden; white-space: nowrap; padding: 3px 0 0 2px; border-left: 1px solid rgba(0, 0, 40, .5); }
.clip:first-child { border-left-color: transparent; }
.clip.picked { background: linear-gradient(90deg, transparent 50%, rgba(255, 255, 255, .12) 50%), linear-gradient(#9fb1ff 19px, #bfe5f4 19px); }
.notes { position: absolute; inset: 0; width: 100%; height: 100%; }
.gl { position: absolute; top: 0; bottom: 0; width: 1px; background: rgba(0, 0, 0, .1); }
.gl.half { background: rgba(0, 0, 0, .04); }
.edge, .head { position: absolute; top: 0; bottom: 0; width: 1px; background: #1a1a1a; }
.head { top: 33px; background: #000; }
.brace { position: absolute; top: 0; height: 13px; background: #a3a3a3; border: 1px solid #2a2a2a; display: flex; justify-content: space-between; }
.heads { flex: 0 0 270px; display: flex; flex-direction: column; gap: 2px; }
.setrow { height: 56px; padding: 24px 0 0 3px; }
.set { display: block; height: 12px; line-height: 12px; width: 30px; border-radius: 6px; background: #a8a8a8; }
.setbtns { display: flex; align-items: center; margin-top: 4px; gap: 6px; }
.rd { width: 12px; height: 12px; border-radius: 50%; background: #a8a8a8; display: grid; place-items: center; }
.sq { width: 23px; height: 12px; background: #a8a8a8; display: grid; place-items: center; }
.first { margin-left: 8px; }
.hrow { display: flex; gap: 2px; flex: none; }
.tname { width: 143px; padding: 2px 0 0 3px; display: flex; align-items: flex-start; gap: 7px; font-weight: 500; white-space: nowrap; color: rgba(0, 0, 0, .8); }
.mname { background: #8ac5ff; gap: 10px; }
.mix { width: 125px; background: #8a8a8a; display: flex; justify-content: space-between; padding: 3px 3px 0 4px; }
.mrow .mix { padding-top: 2px; }
.litrow { background: #a9a9a9; }
.ctl { display: grid; grid-template-columns: 50px 23px 23px; gap: 4px; align-content: start; }
.mb { height: 14px; line-height: 12px; border: 1px solid #555; background: #a4a4a4; font-weight: 700; display: grid; place-items: center; }
.act { background: #ffb607; }
.vol { position: relative; height: 14px; border: 1px solid #555; background: #c6c6c6; display: block; text-align: center; line-height: 12px; }
.vol span { position: relative; }
.vol em { position: absolute; left: 0; top: 0; bottom: 0; background: #6cd8ff; }
.mfill { width: 84%; }
.vol b { position: absolute; left: -1px; top: -1px; width: 6px; height: 6px; border-radius: 50%; background: #f33; border: 1px solid #222; }
.pan { grid-column: span 2; }
.cue { background: #479cfc; }
.meter { display: flex; gap: 1px; padding-bottom: 2px; margin-top: -1px; }
.meter i { width: 4px; background: linear-gradient(#222 8px, #8a8a8a 8px, #8a8a8a 9px, #222 9px); display: flex; align-items: flex-end; }
.meter s { width: 4px; }
.bright s { background: linear-gradient(#8ee34c, #0cff50); }
.bright .full { height: 92%; }
.split s { background: linear-gradient(#239a3c 50%, #0cff50 50%); }
.mrow { height: 18px; }
.arr-side { flex: 0 0 25px; display: flex; flex-direction: column; }
.views { height: 50px; background: #6f6f6f; border-radius: 0 0 0 4px; display: flex; flex-direction: column; align-items: flex-end; gap: 5px; }
.dk { width: 20px; height: 20px; background: #424242; }
.vside { flex: 1; display: flex; flex-direction: column; justify-content: space-between; align-items: center; padding: 12px 4px 27px 0; }
.vscroll { width: 8px; height: 83px; border-radius: 4px; background: #303030; }
.vbtns { display: flex; flex-direction: column; gap: 6px; }
.vbtns button { width: 15px; height: 15px; border-radius: 50%; background: #1a1a1a; color: #777; font-size: 8px; line-height: 15px; }
.vbtns .lt { background: #cfcfcf; color: #333; }
.vbtns .yl { background: #ffb607; color: #333; }

/* device chain */
.chain { display: flex; margin-top: 9px; background: #5a5a5a; border-radius: 5px 5px 0 5px; padding: 5px 3px 4px 6px; height: 212px; overflow: hidden; }
.chaindots { width: 10px; padding: 79px 0 0 2px; display: flex; flex-direction: column; gap: 1px; }
.chaindots i { width: 4px; height: 3px; border-radius: 2px; background: #2a2a2a; }
.chaindots .y { background: #ffb607; }
.rack { display: flex; gap: 2px; border-radius: 5px; overflow: hidden; flex: none; }
.dev { background: #8a8a8a; border-bottom: 2px solid #a9a9a9; height: 203px; flex: none; }
.dev h2 { height: 18px; background: #a9a9a9; display: flex; align-items: center; gap: 4px; padding: 0 5px 0 4px; font-weight: 500; }
.pw { width: 14px; height: 14px; border-radius: 50%; background: #ffb607; border: 1px solid #4c4c4c; }
.dic { margin-left: auto; display: flex; gap: 4px; }
.solo { border-radius: 5px; overflow: hidden; }
.d-rack { width: 291px; border-left: 2px solid #a9a9a9; }
.d-rack h2 { padding-left: 2px; }
.d-kick { width: 171px; } .d-lfo { width: 230px; } .d-end { width: 17px; } .d-env { width: 229px; }
.d-env h2 { padding-left: 3px; }
.d-eq { flex: 1 1 0; min-width: 0; background: #a9a9a9; border-radius: 5px 0 0 5px; }
.rackbody { display: flex; padding: 4px 5px 0 2px; gap: 3px; }
.rackbtns { width: 16px; height: 174px; display: flex; flex-direction: column; gap: 4px; margin-top: -2px; }
.last { margin-top: auto; }
.pads { flex: 1; display: grid; grid-template-columns: repeat(4, 1fr); gap: 3px; }
.pad { height: 41px; border: 1px solid #5a5a5a; border-radius: 3px; overflow: hidden; text-align: center; line-height: 11px; background: #8a8a8a; white-space: nowrap; }
.pn { height: 25px; background: #c6c6c6; padding-top: 2px; display: flow-root; }
.empty .pn { background: none; }
.pick .pn { background: #a9bdc5; }
.pb { display: flex; border-top: 1px solid #5a5a5a; height: 15px; }
.pb button { flex: 1; display: grid; place-items: center; }
.pb button + button { border-left: 1px solid #5a5a5a; }
.pb svg { fill: #5a5a5a; } .pb .hot svg { fill: #ffb607; }
.lcd { background: #171e25; border-radius: 4px; margin: 5px 4px 0; overflow: hidden; color: #ffb532; }
.kick { height: 117px; padding: 4px; }
.kpic { height: 54px; background: #332e25; border-radius: 2px; display: flex; align-items: center; color: #8a8478; padding-left: 18px; }
.kpic svg { margin-left: 24px; }
.kvals { display: flex; gap: 3px; margin-top: 6px; }
.kc { flex: 1; text-align: center; display: flex; flex-direction: column; gap: 3px; }
.kc label, .lrow label { color: #8c8c8c; }
.kc strong { font: 300 20px/20px Roboto, sans-serif; margin-bottom: -3px; }
.kc button { height: 15px; line-height: 11px; border: 1px solid #d6982c; }
.knobs { display: flex; text-align: center; line-height: 12px; white-space: nowrap; }
.kn { display: flex; flex-direction: column; align-items: center; width: 52px; }
.k3 { padding: 6px 0 0 7px; }
.lfo { height: 114px; }
.maprow { height: 24px; padding: 4px; display: flex; gap: 3px; align-items: center; }
.target { width: 85px; height: 15px; line-height: 15px; background: #ffb532; color: #111; font-weight: 500; }
.scope { width: 100%; height: 72px; background: #11181e; }
.tallscope { height: 90px; }
.lrow { display: flex; align-items: center; padding: 2px 0 0 7px; font-weight: 500; gap: 7px; white-space: nowrap; }
.lrow label { font-weight: 400; }
.lrow select { appearance: none; width: 62px; height: 14px; margin-right: 6px; background: linear-gradient(to bottom left, #ffb532 50%, transparent 50%) 50px 4px / 4px 6px no-repeat, linear-gradient(to bottom right, #ffb532 50%, transparent 50%) 54px 4px / 4px 6px no-repeat; }
.lrow label + span { margin-right: 10px; }
.lk, .ek { align-items: flex-end; height: 62px; }
.lk { padding: 0 5px 0 4px; }
.arrowdn { border: 6px solid transparent; border-top: 6px solid #6cd8ff; border-bottom: 0; margin: 1px 0 -1px; }
.gray { border-top-color: #bdbdbd; }
.units { display: flex; flex-direction: column; gap: 3px; margin-bottom: 10px; position: relative; }
.units::before { content: ""; position: absolute; left: -10px; top: 13px; width: 7px; height: 1px; background: #222; }
.units button { width: 20px; height: 15px; line-height: 12px; border: 1px solid #4c4c4c; background: #a4a4a4; font-size: 9px; }
.units .y { background: #ffb532; }
.lk .units { margin-left: 2px; }
.lk .kn, .ek .kn { width: 49px; }
.phase { margin: 0 0 6px 4px; flex: 1; text-align: left; display: flex; flex-direction: column; gap: 2px; }
.pv { height: 14px; border: 1px solid #4c4c4c; background: #c6c6c6; text-align: center; position: relative; margin-bottom: 2px; }
.pv i { position: absolute; right: 0; top: 1px; border: 5px solid transparent; border-right: 8px solid #999; border-left: 0; }
.phase div { display: flex; gap: 4px; }
.phase button { flex: 1; height: 14px; border: 1px solid #4c4c4c; background: #a4a4a4; line-height: 12px; }
.phase .rr { flex: 0 0 14px; border-radius: 50%; font-size: 9px; }
.ek { padding-left: 3px; }
.ek .units { margin-left: 3px; gap: 4px; margin-bottom: 8px; }
.ek .units button { width: 18px; height: 17px; line-height: 14px; }
.cmeter { width: 12px; padding: 80px 0 0 3px; display: flex; gap: 1px; flex: none; }
.cmeter i { width: 3px; height: 43px; background: linear-gradient(#2a2a2a 9px, #8ee34c 9px, #0cff50); }
.eqbody { display: flex; gap: 2px; padding-left: 2px; }
.eqk { flex: 0 0 52px; height: 183px; background: #8a8a8a; border-radius: 4px; line-height: 12px; text-align: center; display: flex; flex-direction: column; justify-content: space-between; padding: 2px 0 4px; }
.eqr { flex: 1; min-width: 0; }
.eqg { width: 100%; height: 145px; border-radius: 4px 0 0 0; }
.bands { display: flex; gap: 3px; overflow: hidden; padding-top: 2px; }
.band { flex: 0 0 48px; height: 36px; background: #8a8a8a; border-radius: 4px; padding: 4px 4px 0; }
.cur { background: none; }
.band button { width: 40px; height: 14px; border: 1px solid #4c4c4c; background: #c6c6c6; display: flex; align-items: center; justify-content: space-between; padding: 0 3px 0 2px; }
.off button { background: #8a8a8a; }
.band label { display: flex; align-items: center; gap: 6px; padding: 2px 0 0 8px; height: 17px; }
.band input { appearance: none; width: 12px; height: 12px; border: 1px solid #4c4c4c; background: #9a9a9a; }
.band input:checked { background: #6cd8ff; }

/* status bar */
.status { display: flex; align-items: flex-end; height: 33px; }
.info { flex: 1; margin-left: 8px; height: 23px; border: 3px solid #5a5a5a; border-radius: 4px; background: #8a8a8a; display: flex; align-items: center; gap: 13px; padding-left: 8px; white-space: nowrap; }
.clipview { width: 223px; height: 23px; border: 3px solid #5a5a5a; border-radius: 4px; margin: 0 8px 0 10px; background: #a4a4a4; }
.clipview svg { width: 100%; height: 100%; }
.devview { width: 268px; height: 33px; background: #5a5a5a; border-radius: 0 0 4px 4px; display: flex; align-items: center; justify-content: space-between; padding: 9px 2px 0 5px; font-weight: 500; white-space: nowrap; }
.end { margin-left: 9px; }
</style>
